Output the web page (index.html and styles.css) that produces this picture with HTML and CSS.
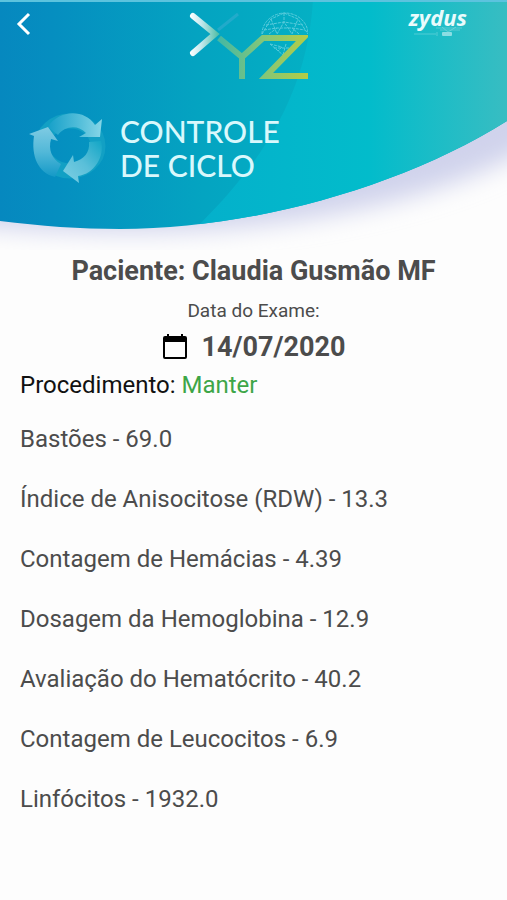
FILE: index.html
```html
<!DOCTYPE html>
<html lang="pt-BR">
<head>
    <meta charset="UTF-8">
    <meta name="viewport" content="width=device-width, initial-scale=1.0">
    <title>Controle de Ciclo</title>
    <link rel="stylesheet" href="styles.css">
</head>
<body>
    <header class="header">
        <svg class="header-bg" viewBox="0 0 507 250" preserveAspectRatio="none" aria-hidden="true">
            <defs>
                <linearGradient id="sea" x1="0" x2="1" y1="0" y2="0">
                    <stop offset="0" stop-color="#0688bf"/>
                    <stop offset="0.1" stop-color="#058ec0"/>
                    <stop offset="0.4" stop-color="#04a4c1"/>
                    <stop offset="0.62" stop-color="#04b0c4"/>
                </linearGradient>
                <linearGradient id="light" gradientUnits="userSpaceOnUse" x1="200" x2="507" y1="0" y2="0">
                    <stop offset="0" stop-color="#04b0cb"/>
                    <stop offset="0.55" stop-color="#02bccb"/>
                    <stop offset="1" stop-color="#38bdc2"/>
                </linearGradient>
                <filter id="soft" x="-20%" y="-20%" width="140%" height="140%">
                    <feGaussianBlur stdDeviation="12"/>
                </filter>
                <clipPath id="wave">
                    <path d="M0 0H507V121C400 188 250 229 120 229C80 229 40 226 0 221Z"/>
                </clipPath>
            </defs>
            <path d="M-30 0H560V130C450 206 270 234 120 232C80 232 20 230 -30 225Z" fill="#d0d3ec" filter="url(#soft)"/>
            <g clip-path="url(#wave)">
                <rect width="507" height="250" fill="url(#sea)"/>
                <path d="M313 0C308 80 275 150 198 226L507 250V0Z" fill="url(#light)"/>
                <rect width="507" height="2" fill="#5cc3de"/>
            </g>
        </svg>
        <div class="topbar">
            <button class="back" type="button" aria-label="Voltar">
                <svg width="16" height="24" viewBox="0 0 16 24"><path d="M13 2L3 12L13 22" fill="none" stroke="#fff" stroke-width="3"/></svg>
            </button>
            <svg class="logo" width="120" height="72" viewBox="0 0 120 72" role="img" aria-label="XYZ">
                <defs>
                    <linearGradient id="chevron" gradientUnits="userSpaceOnUse" x1="2" x2="30" y1="0" y2="0">
                        <stop offset="0" stop-color="#fff"/>
                        <stop offset="0.4" stop-color="#c4e9ee"/>
                        <stop offset="1" stop-color="#55bfa8"/>
                    </linearGradient>
                    <linearGradient id="lime" gradientUnits="userSpaceOnUse" x1="28" x2="120" y1="0" y2="0">
                        <stop offset="0" stop-color="#42b7a5"/>
                        <stop offset="0.5" stop-color="#82c67a"/>
                        <stop offset="1" stop-color="#b4cc45"/>
                    </linearGradient>
                </defs>
                <g fill="none" stroke="#6fd3e2" stroke-width="1" stroke-dasharray="3 1" opacity="0.8">
                    <path d="M74 26A23 21 0 0 1 120 26"/>
                    <path d="M74 26L83 11L96 5L110 11L120 26M78 17L96 14L115 17M83 11L89 26L96 14L104 26L110 11M76 22L89 20L104 20L117 22M96 5V14M81 26L89 20M111 26L104 20"/>
                    <path d="M82 36L95 47L106 36M82 36L94 39L90 43M98 36L95 47M86 40H102"/>
                </g>
                <line x1="30" y1="22" x2="50" y2="6" stroke="#35add0" stroke-width="3" opacity="0.6"/>
                <polyline points="5,8 27,26 5,45" fill="none" stroke="url(#chevron)" stroke-width="6" stroke-linecap="round"/>
                <g fill="none" stroke="url(#lime)" stroke-width="6">
                    <polyline points="31,30 54,49 75,30 115,30 78,68 121,68"/>
                    <line x1="54" y1="48" x2="54" y2="71"/>
                </g>
            </svg>
            <div class="brand">
                <span class="brand-name">zydus</span>
                <svg class="brand-mark" width="48" height="12" viewBox="0 0 48 12" aria-hidden="true">
                    <g stroke="#a5e5ea" fill="none" stroke-width="1">
                        <path d="M22 2H48M26 4H46M28 1L34 6L42 1M0 8H22M23 6V10" opacity="0.4"/>
                    </g>
                    <rect x="28" y="6" width="10" height="4" rx="1" fill="#a5e5ea" opacity="0.8"/>
                </svg>
            </div>
        </div>
        <div class="title-row">
            <svg class="cycle" width="80" height="72" viewBox="0 0 80 72" aria-hidden="true">
                <defs>
                    <linearGradient id="a1" x1="0" x2="1" y1="0" y2="0">
                        <stop offset="0" stop-color="#16a0c9"/>
                        <stop offset="0.6" stop-color="#55bfda"/>
                        <stop offset="1" stop-color="#86d6e7"/>
                    </linearGradient>
                    <linearGradient id="a2" x1="0" x2="0" y1="1" y2="0">
                        <stop offset="0" stop-color="#1399c7"/>
                        <stop offset="0.5" stop-color="#52b8d8"/>
                        <stop offset="1" stop-color="#7fcbe3"/>
                    </linearGradient>
                    <linearGradient id="a3" x1="1" x2="0" y1="0" y2="1">
                        <stop offset="0" stop-color="#12a6c6"/>
                        <stop offset="0.5" stop-color="#5abfd9"/>
                        <stop offset="1" stop-color="#7fd0e4"/>
                    </linearGradient>
                </defs>
                <ellipse cx="42" cy="34" rx="28" ry="25" fill="none" stroke="#12a0c4" stroke-width="15"/>
                <path d="M20 15C30-2 56-4 67 13L74 7L72 25L51 25L58 21C50 12 36 14 30 23Z" fill="url(#a1)"/>
                <path d="M1 22L20 15L30 29L23 27C20 38 24 47 33 52L27 65C10 61 3 44 6 24Z" fill="url(#a2)"/>
                <path d="M35 59L45 43L46 50C56 47 62 41 61 30L73 29C77 45 66 62 50 64L51 71Z" fill="url(#a3)"/>
            </svg>
            <h1 class="title">CONTROLE<br>DE CICLO</h1>
        </div>
    </header>

    <main class="content">
        <h2 class="patient">Paciente: Claudia Gusmão MF</h2>
        <p class="label">Data do Exame:</p>
        <div class="date">
            <svg width="26" height="26" viewBox="0 0 26 26" aria-hidden="true">
                <path d="M3 2H5V0H7V2H19V0H21V2H23Q25 2 25 4V23Q25 25 23 25H3Q1 25 1 23V4Q1 2 3 2ZM3 8V23H23V8Z" fill="#000" fill-rule="evenodd"/>
            </svg>
            <time datetime="2020-07-14">14/07/2020</time>
        </div>
        <p class="procedure">Procedimento: <span class="status">Manter</span></p>
        <ul class="results">
            <li>Bastões - 69.0</li>
            <li>Índice de Anisocitose (RDW) - 13.3</li>
            <li>Contagem de Hemácias - 4.39</li>
            <li>Dosagem da Hemoglobina - 12.9</li>
            <li>Avaliação do Hematócrito - 40.2</li>
            <li>Contagem de Leucocitos - 6.9</li>
            <li>Linfócitos - 1932.0</li>
        </ul>
    </main>
</body>
</html>
```
FILE: styles.css
```css
body {
    margin: 0;
    font-family: Roboto, "Liberation Sans", sans-serif;
    font-size: 24px;
    color: #4c4c4c;
    background-color: #fdfdfd;
}

.header {
    position: relative;
    height: 250px;
}

.header-bg {
    position: absolute;
    top: 0;
    left: 0;
    width: 100%;
    height: 100%;
}

.topbar {
    position: relative;
    display: grid;
    grid-template-columns: 1fr auto 1fr;
    align-items: start;
    padding: 8px 24px 0 12px;
}

.back {
    justify-self: start;
    display: flex;
    padding: 4px;
    border: 0;
    background: none;
    cursor: pointer;
}

.logo {
    display: block;
}

.brand {
    justify-self: end;
    display: flex;
    flex-direction: column;
    align-items: center;
    margin-right: 16px;
    color: #e9fbfc;
}

.brand-name {
    font-family: "Open Sans", sans-serif;
    font-size: 22px;
    font-style: italic;
    font-weight: 700;
    line-height: 18px;
}

.brand-mark {
    display: block;
}

.title-row {
    position: relative;
    display: flex;
    align-items: center;
    gap: 12px;
    padding: 32px 28px 0;
}

.title {
    margin: 0;
    font-family: Lato, sans-serif;
    font-size: 30px;
    font-weight: 500;
    line-height: 34px;
    color: #d9f8fc;
}

.content {
    padding: 5px 20px 24px;
}

.patient {
    margin: 0;
    font-size: 27px;
    font-weight: 700;
    line-height: 32px;
    text-align: center;
}

.label {
    margin: 12px 0 8px;
    font-size: 19px;
    line-height: 24px;
    text-align: center;
}

.date {
    display: flex;
    justify-content: center;
    align-items: center;
    gap: 14px;
    font-size: 27px;
    font-weight: 700;
    line-height: 32px;
}

.procedure {
    margin: 8px 0 10px;
    line-height: 28px;
    color: #111;
}

.status {
    color: #3ea648;
}

.results {
    margin: 0;
    padding: 0;
    list-style: none;
}

.results li {
    line-height: 60px;
}
```
